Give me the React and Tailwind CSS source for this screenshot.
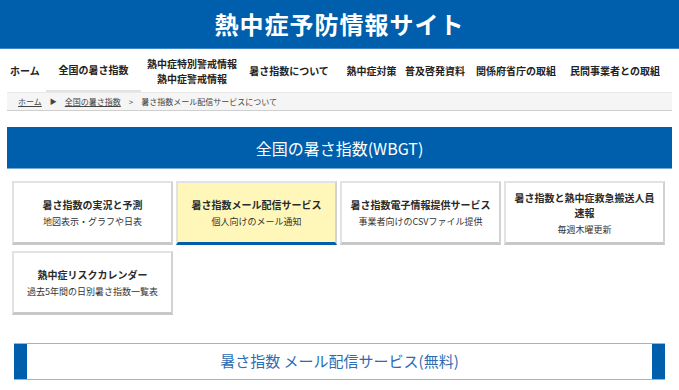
import React from 'react';

const navItems = [
  { label: 'ホーム', w: 'w-[46px]', align: 'justify-start pl-[10px]' },
  { label: '全国の暑さ指数', w: 'w-[95px]', active: true },
  { label: ['熱中症特別警戒情報', '熱中症警戒情報'], w: 'w-[102px]' },
  { label: '暑さ指数について', w: 'w-[92px]' },
  { label: '熱中症対策', w: 'w-[73px]' },
  { label: '普及啓発資料', w: 'w-[54px]' },
  { label: '関係府省庁の取組', w: 'w-[108px]' },
  { label: '民間事業者との取組', w: 'w-[90px]' },
];

const cards = [
  { title: ['暑さ指数の実況と予測'], sub: '地図表示・グラフや日表' },
  { title: ['暑さ指数メール配信サービス'], sub: '個人向けのメール通知', active: true },
  { title: ['暑さ指数電子情報提供サービス'], sub: '事業者向けのCSVファイル提供' },
  { title: ['暑さ指数と熱中症救急搬送人員', '速報'], sub: '毎週木曜更新' },
  { title: ['熱中症リスクカレンダー'], sub: '過去5年間の日別暑さ指数一覧表' },
];

const Card = ({ title, sub, active }) => (
  <div
    className={
      'w-[161px] h-[64px] flex flex-col items-center justify-center text-center border-2 border-[#e2e2e2] border-r-[#d2d2d2] border-b-[3px] ' +
      (active ? 'bg-[#fff7b9] border-b-[#005fad]' : 'bg-white border-b-[#c8c8c8]')
    }
  >
    <div className="text-[10px] font-bold leading-[15px] text-[#2a2a2a]">
      {title.map((t) => (
        <div key={t}>{t}</div>
      ))}
    </div>
    <div className="text-[9px] leading-[12px] text-[#333] mt-[4px]">{sub}</div>
  </div>
);

const App = () => {
  return (
    <div className="w-[679px] h-[390px] overflow-hidden bg-white font-['Noto_Sans_CJK_JP','Noto_Sans',sans-serif] text-[#222]">
      {/* site header */}
      <div className="h-[49px] bg-[#005fad] border-b border-[#3d86c8] flex items-center justify-center">
        <h1 className="text-white text-[24px] font-bold tracking-[1px] leading-none">熱中症予防情報サイト</h1>
      </div>

      {/* global nav */}
      <nav className="h-[43px] flex items-stretch">
        {navItems.map((item, i) => (
          <div
            key={i}
            className={
              'flex items-center whitespace-nowrap text-[10px] font-bold leading-[15px] text-center ' +
              item.w + ' ' + (item.align || 'justify-center') +
              (item.active ? ' border-b-[2px] border-[#e3e3e3]' : '')
            }
          >
            {Array.isArray(item.label) ? (
              <div>
                {item.label.map((l) => (
                  <div key={l}>{l}</div>
                ))}
              </div>
            ) : (
              item.label
            )}
          </div>
        ))}
      </nav>

      {/* breadcrumb */}
      <div className="mx-[7px] h-[19px] bg-[#f5f5f5] border-t border-[#e8e8e8] border-b border-b-[#cfcfcf] flex items-center pl-[11px] text-[8px] text-[#444] gap-[8px]">
        <span className="underline">ホーム</span>
        <span className="text-[7px]">▶</span>
        <span className="underline">全国の暑さ指数</span>
        <span>&gt;</span>
        <span>暑さ指数メール配信サービスについて</span>
      </div>

      {/* section heading */}
      <div className="mx-[7px] mt-[16px] h-[42px] bg-[#005fad] border-b border-[#7aa8d8] flex items-center justify-center">
        <h2 className="text-white text-[16px] leading-none">全国の暑さ指数(WBGT)</h2>
      </div>

      {/* menu cards */}
      <div className="mt-[12px] pl-[12px] flex flex-wrap gap-x-[3px] gap-y-[6px] w-[670px]">
        {cards.map((c, i) => (
          <Card key={i} {...c} />
        ))}
      </div>

      {/* sub heading */}
      <div className="mx-[14px] mt-[28px] h-[37px] flex border-y border-[#8db7e2]">
        <div className="w-[13px] bg-[#005fad]" />
        <div className="flex-1 flex items-center justify-center text-[15px] text-[#2d6cb2]">
          暑さ指数 メール配信サービス(無料)
        </div>
        <div className="w-[13px] bg-[#005fad]" />
      </div>
    </div>
  );
};

export default App;
